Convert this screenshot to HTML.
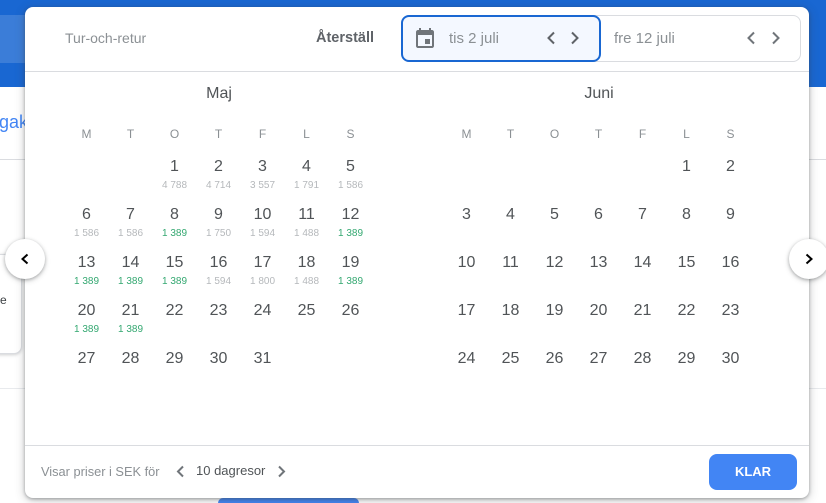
<!DOCTYPE html>
<html><head><meta charset="utf-8"><style>
html,body{margin:0;padding:0}
html{width:826px;height:503px;overflow:hidden}
body{width:826px;height:503px;position:relative;overflow:hidden;background:#fff;font-family:"Liberation Sans",sans-serif;color:#3c4043}
.a{position:absolute;white-space:nowrap}
.dlg{position:absolute;left:25px;top:7px;width:784px;height:491px;background:#fff;border-radius:8px;box-shadow:0 1px 3px rgba(60,64,67,.4),0 2px 10px rgba(60,64,67,.3)}
.c{position:absolute;width:44px;text-align:center;white-space:nowrap}
.h{font-size:12px;color:#8b9094;height:14px;line-height:14px}
.n{font-size:16px;color:#505457;height:20px;line-height:20px}
.p{font-size:10px;color:#b5b8bb;height:12px;line-height:12px}
.g{color:#34a871}
.x1{left:64.5px}.x2{left:108.5px}.x3{left:152.5px}.x4{left:196.5px}.x5{left:240.5px}.x6{left:284.5px}.x7{left:328.5px}
.y1{left:444.5px}.y2{left:488.5px}.y3{left:532.5px}.y4{left:576.5px}.y5{left:620.5px}.y6{left:664.5px}.y7{left:708.5px}
.h{top:127px}
.r1{top:157px}.r2{top:205px}.r3{top:253px}.r4{top:301px}.r5{top:349px}
.q1{top:180px}.q2{top:228px}.q3{top:276px}.q4{top:324px}
svg{position:absolute;overflow:visible}
</style></head><body>
<div class="a" style="left:0;top:0;width:826px;height:87px;background:#1967d2"></div>
<div class="a" style="left:0;top:15px;width:25px;height:48px;background:#3b7dd8"></div>
<div class="a" style="left:0;top:159px;width:826px;height:1px;background:#dadce0"></div>
<div class="a" style="left:0;top:388px;width:826px;height:1px;background:#e8eaed"></div>
<div class="a" style="left:-10px;top:254px;width:30px;height:98px;border:1px solid #dadce0;border-radius:8px;background:#fff;box-shadow:0 1px 3px rgba(60,64,67,.25)"></div>
<div class="a" style="left:-1px;top:112px;font-size:18px;line-height:20px;color:#4285f4">gak</div>
<div class="a" style="left:0;top:292px;font-size:12px;line-height:16px;color:#3c4043">e</div>
<div class="a" style="left:218px;top:498px;width:141px;height:5px;background:#4285f4;border-radius:8px 8px 0 0"></div>

<div class="dlg"></div>
<div class="a" style="left:25px;top:71px;width:784px;height:1px;background:#dadce0"></div>
<div class="a" style="left:25px;top:445px;width:784px;height:1px;background:#dadce0"></div>

<div class="a" style="left:65px;top:30px;font-size:14px;line-height:16px;color:#8b9094">Tur-och-retur</div>
<div class="a" style="left:316px;top:30px;font-size:14.500px;line-height:16px;font-weight:bold;color:#5f6368">Återställ</div>

<div class="a" style="left:402px;top:15px;width:397px;height:45px;border:1px solid #dadce0;border-radius:8px"></div>
<div class="a" style="left:401px;top:15px;width:196px;height:43px;border:2px solid #1967d2;border-radius:8px;background:#f4f8ff"></div>

<svg style="left:413px;top:27px" width="24" height="24" viewBox="0 0 24 24"><path fill="#70757a" d="M17 12h-5v5h5v-5zM16 1v2H8V1H6v2H5c-1.110 0-1.990.9-1.990 2L3 19c0 1.100.89 2 2 2h14c1.100 0 2-.9 2-2V5c0-1.100-.9-2-2-2h-1V1h-2zm3 18H5V8h14v11z"/></svg>
<div class="a" style="left:449px;top:31px;font-size:15px;line-height:16px;color:#8b9094">tis 2 juli</div>
<div class="a" style="left:614px;top:31px;font-size:15px;line-height:16px;color:#8b9094">fre 12 juli</div>

<svg style="left:546px;top:31px" width="10" height="14"><path d="M8 1.500L2.500 7 8 12.500" fill="none" stroke="#5f6368" stroke-width="2"/></svg>
<svg style="left:570px;top:31px" width="10" height="14"><path d="M2 1.500L7.500 7 2 12.500" fill="none" stroke="#5f6368" stroke-width="2"/></svg>
<svg style="left:746px;top:31px" width="10" height="14"><path d="M8 1.500L2.500 7 8 12.500" fill="none" stroke="#70757a" stroke-width="2"/></svg>
<svg style="left:771px;top:31px" width="10" height="14"><path d="M2 1.500L7.500 7 2 12.500" fill="none" stroke="#70757a" stroke-width="2"/></svg>

<div class="a" style="left:65px;top:85px;width:308px;text-align:center;font-size:16px;line-height:18px;color:#505457">Maj</div>
<div class="a" style="left:445px;top:85px;width:308px;text-align:center;font-size:16px;line-height:18px;color:#505457">Juni</div>

<div class="c h x1">M</div><div class="c h x2">T</div><div class="c h x3">O</div><div class="c h x4">T</div><div class="c h x5">F</div><div class="c h x6">L</div><div class="c h x7">S</div>
<div class="c h y1">M</div><div class="c h y2">T</div><div class="c h y3">O</div><div class="c h y4">T</div><div class="c h y5">F</div><div class="c h y6">L</div><div class="c h y7">S</div>

<div class="c n r1 x3">1</div><div class="c n r1 x4">2</div><div class="c n r1 x5">3</div><div class="c n r1 x6">4</div><div class="c n r1 x7">5</div>
<div class="c p q1 x3">4 788</div><div class="c p q1 x4">4 714</div><div class="c p q1 x5">3 557</div><div class="c p q1 x6">1 791</div><div class="c p q1 x7">1 586</div>

<div class="c n r2 x1">6</div><div class="c n r2 x2">7</div><div class="c n r2 x3">8</div><div class="c n r2 x4">9</div><div class="c n r2 x5">10</div><div class="c n r2 x6">11</div><div class="c n r2 x7">12</div>
<div class="c p q2 x1">1 586</div><div class="c p q2 x2">1 586</div><div class="c p q2 x3 g">1 389</div><div class="c p q2 x4">1 750</div><div class="c p q2 x5">1 594</div><div class="c p q2 x6">1 488</div><div class="c p q2 x7 g">1 389</div>

<div class="c n r3 x1">13</div><div class="c n r3 x2">14</div><div class="c n r3 x3">15</div><div class="c n r3 x4">16</div><div class="c n r3 x5">17</div><div class="c n r3 x6">18</div><div class="c n r3 x7">19</div>
<div class="c p q3 x1 g">1 389</div><div class="c p q3 x2 g">1 389</div><div class="c p q3 x3 g">1 389</div><div class="c p q3 x4">1 594</div><div class="c p q3 x5">1 800</div><div class="c p q3 x6">1 488</div><div class="c p q3 x7 g">1 389</div>

<div class="c n r4 x1">20</div><div class="c n r4 x2">21</div><div class="c n r4 x3">22</div><div class="c n r4 x4">23</div><div class="c n r4 x5">24</div><div class="c n r4 x6">25</div><div class="c n r4 x7">26</div>
<div class="c p q4 x1 g">1 389</div><div class="c p q4 x2 g">1 389</div>

<div class="c n r5 x1">27</div><div class="c n r5 x2">28</div><div class="c n r5 x3">29</div><div class="c n r5 x4">30</div><div class="c n r5 x5">31</div>

<div class="c n r1 y6">1</div><div class="c n r1 y7">2</div>
<div class="c n r2 y1">3</div><div class="c n r2 y2">4</div><div class="c n r2 y3">5</div><div class="c n r2 y4">6</div><div class="c n r2 y5">7</div><div class="c n r2 y6">8</div><div class="c n r2 y7">9</div>
<div class="c n r3 y1">10</div><div class="c n r3 y2">11</div><div class="c n r3 y3">12</div><div class="c n r3 y4">13</div><div class="c n r3 y5">14</div><div class="c n r3 y6">15</div><div class="c n r3 y7">16</div>
<div class="c n r4 y1">17</div><div class="c n r4 y2">18</div><div class="c n r4 y3">19</div><div class="c n r4 y4">20</div><div class="c n r4 y5">21</div><div class="c n r4 y6">22</div><div class="c n r4 y7">23</div>
<div class="c n r5 y1">24</div><div class="c n r5 y2">25</div><div class="c n r5 y3">26</div><div class="c n r5 y4">27</div><div class="c n r5 y5">28</div><div class="c n r5 y6">29</div><div class="c n r5 y7">30</div>

<div class="a" style="left:5px;top:239px;width:40px;height:40px;border-radius:50%;background:#fff;box-shadow:0 1px 3px rgba(60,64,67,.35),0 2px 6px rgba(60,64,67,.2)"></div>
<svg style="left:20px;top:253px" width="10" height="12"><path d="M7.500 1.500L2.500 6 7.500 10.500" fill="none" stroke="#000" stroke-width="2"/></svg>
<div class="a" style="left:789px;top:239px;width:40px;height:40px;border-radius:50%;background:#fff;box-shadow:0 1px 3px rgba(60,64,67,.35),0 2px 6px rgba(60,64,67,.2)"></div>
<svg style="left:804px;top:253px" width="10" height="12"><path d="M2.500 1.500L7.500 6 2.500 10.500" fill="none" stroke="#000" stroke-width="2"/></svg>

<div class="a" style="left:41px;top:464px;font-size:12.800px;line-height:16px;color:#8b9094">Visar priser i SEK för</div>
<svg style="left:175px;top:465px" width="10" height="14"><path d="M8 1.500L3 6.500 8 11.500" fill="none" stroke="#70757a" stroke-width="2"/></svg>
<div class="a" style="left:196px;top:463px;font-size:13px;line-height:16px;color:#505457">10 dagresor</div>
<svg style="left:277px;top:465px" width="10" height="14"><path d="M2 1.500L7 6.500 2 11.500" fill="none" stroke="#70757a" stroke-width="2"/></svg>

<div class="a" style="left:709px;top:454px;width:88px;height:36px;line-height:35px;background:#4285f4;border-radius:8px;color:#fff;font-size:13px;font-weight:bold;text-align:center">KLAR</div>
</body></html>
